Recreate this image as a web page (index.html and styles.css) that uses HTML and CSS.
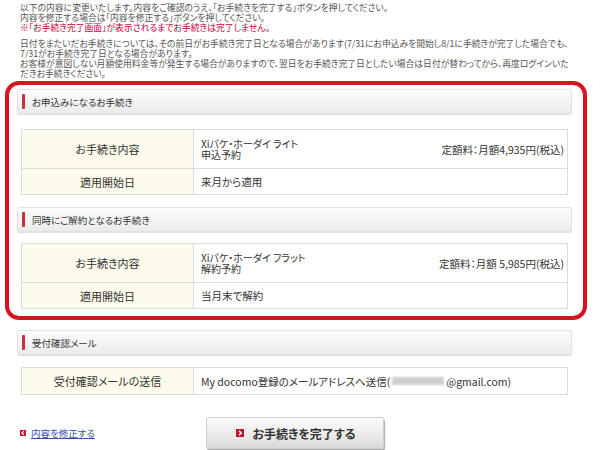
FILE: index.html
```html
<!DOCTYPE html>
<html lang="ja">
<head>
<meta charset="utf-8">
<link rel="stylesheet" href="styles.css">
</head>
<body>
<div class="page">
  <div class="intro">
    <p class="para">以下の内容に変更いたします。内容をご確認のうえ、「お手続きを完了する」ボタンを押してください。<br>内容を修正する場合は「内容を修正する」ボタンを押してください。<br><span class="warn">※「お手続き完了画面」が表示されるまでお手続きは完了しません。</span></p>
    <p class="para">日付をまたいだお手続きについては、その前日がお手続き完了日となる場合があります(7/31にお申込みを開始し8/1に手続きが完了した場合でも、<br>7/31がお手続き完了日となる場合があります。<br>お客様が意図しない月額使用料金等が発生する場合がありますので、翌日をお手続き完了日としたい場合は日付が替わってから、再度ログインいた<br>だきお手続きください。</p>
  </div>

  <div class="content">
    <div class="highlight">
      <div class="sec-head"><span class="bar"></span>お申込みになるお手続き</div>
      <div class="tbl tbl-first">
        <div class="row tall">
          <div class="label">お手続き内容</div>
          <div class="value split">
            <div class="two">Xiパケ・ホーダイ ライト<br>申込予約</div>
            <div class="price">定額料：月額4,935円(税込)</div>
          </div>
        </div>
        <div class="row">
          <div class="label">適用開始日</div>
          <div class="value">来月から適用</div>
        </div>
      </div>

      <div class="sec-head sec-second"><span class="bar"></span>同時にご解約となるお手続き</div>
      <div class="tbl tbl-second">
        <div class="row tall">
          <div class="label">お手続き内容</div>
          <div class="value split">
            <div class="two">Xiパケ・ホーダイ フラット<br>解約予約</div>
            <div class="price">定額料：月額 5,985円(税込)</div>
          </div>
        </div>
        <div class="row">
          <div class="label">適用開始日</div>
          <div class="value">当月末で解約</div>
        </div>
      </div>
    </div>

    <div class="sec-head sec-mail"><span class="bar"></span>受付確認メール</div>
    <div class="tbl tbl-mail">
      <div class="row">
        <div class="label">受付確認メールの送信</div>
        <div class="value">My docomo登録のメールアドレスへ送信(<span class="blur"></span>@gmail.com)</div>
      </div>
    </div>

    <div class="actions">
      <a class="back" href="#"><span class="sq sq-back"><svg width="6" height="6" viewBox="0 0 6 6"><path d="M3.8 1.2 L2 3 L3.8 4.8" fill="none" stroke="#fff" stroke-width="1.2"/></svg></span><span class="back-text">内容を修正する</span></a>
      <button class="submit" type="button"><span class="sq sq-go"><svg width="8" height="8" viewBox="0 0 8 8"><path d="M3 1.8 L5.2 4 L3 6.2" fill="none" stroke="#fff" stroke-width="1.5"/></svg></span>お手続きを完了する</button>
    </div>
  </div>
</div>
</body>
</html>
```

FILE: styles.css
```css
* { box-sizing: border-box; }
body {
  margin: 0;
  background: #fff;
  font-family: "Noto Sans CJK JP", "Noto Sans", sans-serif;
  font-feature-settings: "palt";
  color: #333;
}
.page { width: 600px; height: 450px; overflow: hidden; }

.intro { padding: 3px 0 0 20px; }
.para {
  margin: 0;
  font-size: 8.8px;
  line-height: 10px;
  color: #555;
  white-space: nowrap;
}
.para + .para { margin-top: 6px; }
.warn { color: #c8003c; }

.content { width: 555px; margin-left: 17px; }

.highlight {
  margin: 2px -15px 0 -12px;
  border: 4px solid #d8151f;
  border-radius: 14px;
  padding: 4px 11px 7px 8px;
}

.sec-head {
  height: 25px;
  display: flex;
  align-items: center;
  gap: 7px;
  padding-left: 4px;
  font-size: 9.5px;
  color: #333;
  background: linear-gradient(#fdfdfd, #ebebeb);
  border: 1px solid #e2e2e2;
  border-radius: 2px;
  box-shadow: 0 1px 1px #ddd;
}
.bar {
  width: 3px;
  height: 15px;
  background: #c8303c;
  border-radius: 1px;
}
.sec-second { margin-top: 12px; }
.sec-mail { margin-top: 10px; }

.tbl {
  margin: 0 4px;
  border: 1px solid #dcdcdc;
}
.tbl-first { margin-top: 15px; }
.tbl-second { margin-top: 11px; }
.tbl-mail { margin-top: 12px; }

.row {
  display: flex;
  height: 26px;
}
.row + .row { border-top: 1px solid #dcdcdc; }
.row.tall { height: 38px; }

.label {
  width: 172px;
  flex: none;
  display: flex;
  align-items: center;
  justify-content: center;
  background: #fdfbec;
  border-right: 1px solid #dcdcdc;
  font-size: 11px;
  color: #333;
}
.value {
  flex: 1;
  display: flex;
  align-items: center;
  padding: 0 3px 0 7px;
  font-size: 10.5px;
  color: #333;
  white-space: nowrap;
}
.value.split { justify-content: space-between; }
.two { line-height: 11px; font-size: 10px; }
.price { font-size: 10.5px; }

.blur {
  display: inline-block;
  width: 52px;
  height: 8px;
  margin: 0 2px;
  background: #cfcfcf;
  filter: blur(1.2px);
  vertical-align: middle;
}

.actions {
  display: flex;
  align-items: center;
  margin-top: 22px;
  padding-left: 3px;
}
.back {
  display: flex;
  align-items: center;
  gap: 5px;
  font-size: 9.5px;
  color: #3a4fae;
  text-decoration: none;
  width: 186px;
}
.back-text { text-decoration: underline; }
.sq {
  display: inline-flex;
  align-items: center;
  justify-content: center;
  background: #c8102e;
}
.sq-back { width: 6px; height: 6px; }
.sq-go { width: 8px; height: 8px; margin-right: 8px; }

.submit {
  width: 178px;
  height: 32px;
  display: flex;
  align-items: center;
  justify-content: center;
  padding: 0 0 0 2px;
  font-family: "Noto Sans CJK JP", sans-serif;
  font-feature-settings: "palt";
  font-size: 12px;
  font-weight: 700;
  color: #333;
  background: linear-gradient(#fbfbfb, #e6e6e6 70%, #d8d8d8);
  border: 1px solid #cfcfcf;
  border-radius: 3px;
  box-shadow: 1px 2px 1px #aaa;
}
```
